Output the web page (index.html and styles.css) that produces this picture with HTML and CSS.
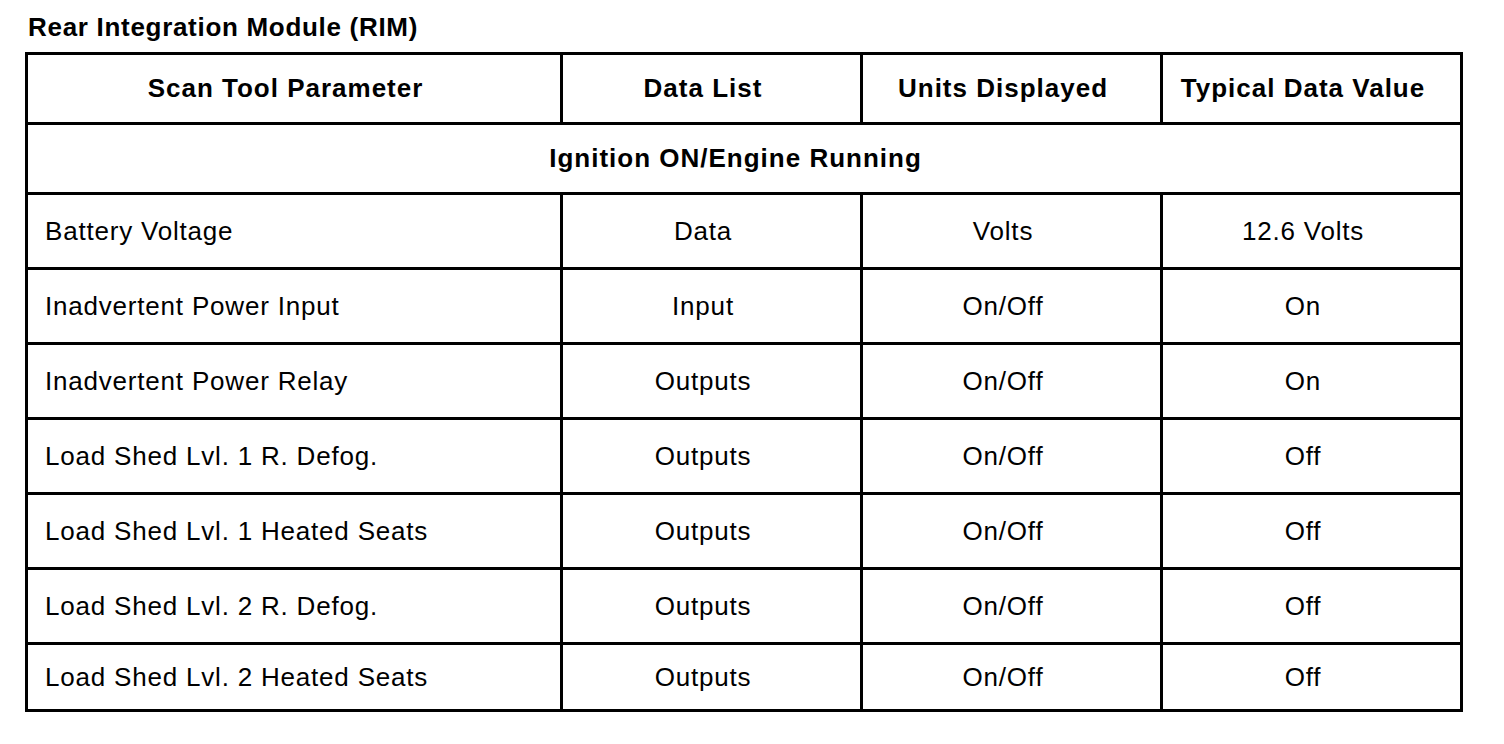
FILE: index.html
```html
<!DOCTYPE html>
<html>
<head>
<meta charset="utf-8">
<link rel="stylesheet" href="styles.css">
</head>
<body>
<div class="page">
  <h1 class="title">Rear Integration Module (RIM)</h1>
  <table class="grid">
    <colgroup>
      <col class="c1"><col class="c2"><col class="c3"><col class="c4">
    </colgroup>
    <thead>
      <tr class="head">
        <th>Scan Tool Parameter</th>
        <th>Data List</th>
        <th>Units Displayed</th>
        <th>Typical Data Value</th>
      </tr>
    </thead>
    <tbody>
      <tr class="section"><th colspan="4">Ignition ON/Engine Running</th></tr>
      <tr class="row"><td class="name">Battery Voltage</td><td>Data</td><td>Volts</td><td>12.6 Volts</td></tr>
      <tr class="row"><td class="name">Inadvertent Power Input</td><td>Input</td><td>On/Off</td><td>On</td></tr>
      <tr class="row"><td class="name">Inadvertent Power Relay</td><td>Outputs</td><td>On/Off</td><td>On</td></tr>
      <tr class="row"><td class="name">Load Shed Lvl. 1 R. Defog.</td><td>Outputs</td><td>On/Off</td><td>Off</td></tr>
      <tr class="row"><td class="name">Load Shed Lvl. 1 Heated Seats</td><td>Outputs</td><td>On/Off</td><td>Off</td></tr>
      <tr class="row"><td class="name">Load Shed Lvl. 2 R. Defog.</td><td>Outputs</td><td>On/Off</td><td>Off</td></tr>
      <tr class="row last"><td class="name">Load Shed Lvl. 2 Heated Seats</td><td>Outputs</td><td>On/Off</td><td>Off</td></tr>
    </tbody>
  </table>
</div>
</body>
</html>
```

FILE: styles.css
```css
html, body {
  margin: 0;
  padding: 0;
  background: #fff;
}
body {
  font-family: "Liberation Sans", Arial, sans-serif;
  color: #000;
}
.page {
  padding: 12px 0 0 25px;
}
.title {
  margin: 0 0 10px 3px;
  font-size: 26px;
  font-weight: bold;
  line-height: 30px;
  letter-spacing: 0.7px;
}
.grid {
  border-collapse: collapse;
  width: 1437px;
  table-layout: fixed;
}
.c1 { width: 535px; }
.c2 { width: 300px; }
.c3 { width: 300px; }
.c4 { width: 300px; }
.grid th, .grid td {
  border: 3px solid #000;
  font-size: 26px;
  letter-spacing: 0.8px;
  text-align: center;
  padding: 0 17px 0 0;
}
.grid th {
  font-weight: bold;
  letter-spacing: 1px;
}
.head { height: 70px; }
.section { height: 70px; }
.row { height: 75px; }
.row.last { height: 67px; }
.grid td.name {
  text-align: left;
  padding: 0 0 0 17px;
}
```
